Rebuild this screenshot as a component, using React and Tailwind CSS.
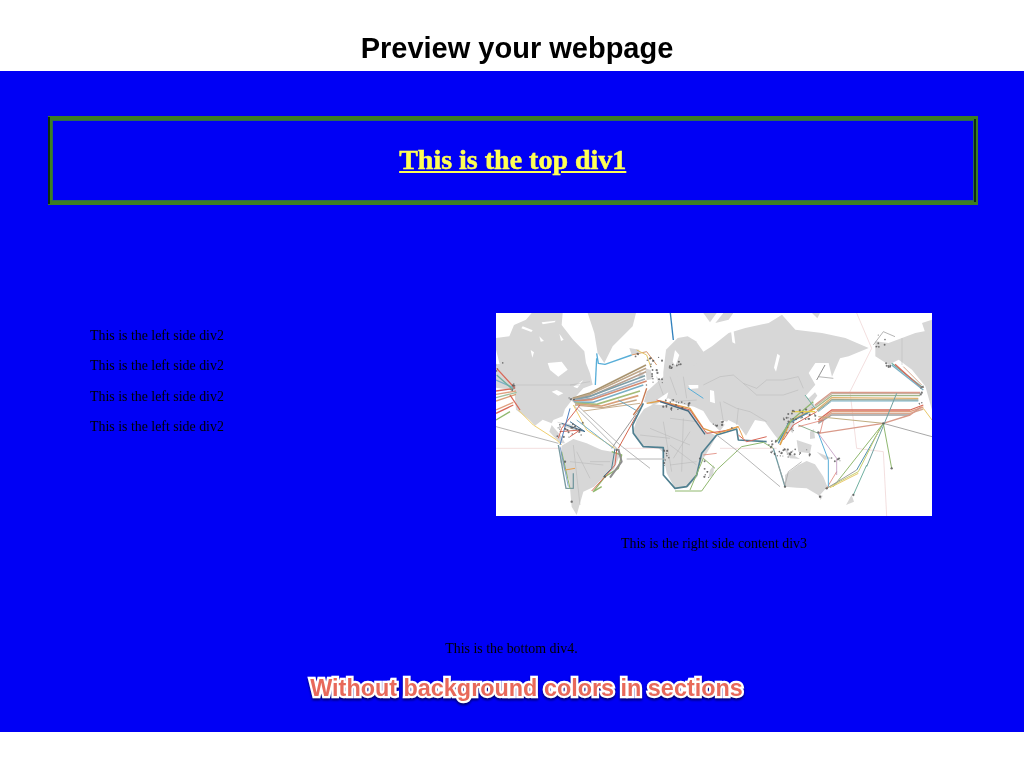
const land = [
  "M18,99 L58,94 L72,60 L108,44 L125,24 L218,24 L215,60 L250,105 L283,139 L288,174 L300,205 L308,239 L280,250 L258,274 L243,289 L225,312 L218,334 L190,345 L185,355 L158,344 L135,362 L118,344 L78,314 L73,254 L50,215 L28,174 L18,134 Z",
  "M293,24 L438,24 L428,64 L398,94 L368,124 L343,174 L323,144 L313,84 Z",
  "M418,129 L448,134 L448,146 L425,150 Z",
  "M466,190 L482,195 L488,222 L470,226 Z",
  "M448,200 L462,205 L456,220 L445,215 Z",
  "M528,134 L563,99 L593,94 L618,109 L640,140 L650,200 L600,280 L520,270 L520,200 Z",
  "M618,180 L640,140 L666,124 L716,84 L766,69 L836,54 L876,29 L916,74 L996,84 L1066,99 L1136,129 L1076,154 L1050,160 L1026,215 L1016,174 L976,174 L956,204 L976,239 L946,274 L966,285 L978,310 L945,325 L915,345 L905,370 L880,400 L868,408 L850,385 L825,350 L795,345 L768,392 L745,360 L715,345 L690,378 L660,350 L640,318 L612,305 L570,296 L535,280 L492,300 L462,290 L470,260 L492,240 L520,215 L560,215 L595,190 Z",
  "M676,54 L700,24 L730,24 L716,44 Z",
  "M640,24 L680,24 L660,52 Z",
  "M966,24 L990,24 L982,40 Z",
  "M1156,109 L1196,114 L1236,99 L1276,84 L1326,74 L1326,315 L1306,244 L1266,194 L1226,164 L1196,179 L1156,154 Z",
  "M1296,54 L1326,44 L1326,90 L1306,84 Z",
  "M18,178 L36,176 L78,245 L62,254 L18,248 Z",
  "M440,345 L462,312 L490,298 L570,305 L605,315 L640,375 L680,392 L650,445 L628,480 L622,515 L595,545 L555,550 L530,505 L518,440 L500,425 L455,422 L428,382 Z",
  "M200,350 L240,358 L285,378 L270,382 L225,365 Z",
  "M185,360 L215,395 L225,415 L210,415 L178,380 Z",
  "M215,422 L250,402 L290,415 L335,435 L392,445 L372,492 L340,518 L312,545 L280,560 L260,630 L245,605 L238,525 L210,470 Z",
  "M885,510 L925,480 L950,468 L975,478 L1000,515 L1012,545 L988,572 L950,550 L920,548 L885,545 Z",
  "M878,425 L900,445 L930,462 L900,460 Z",
  "M920,405 L965,420 L960,445 L925,440 Z",
  "M980,440 L1025,460 L1005,465 Z",
  "M935,300 L975,262 L982,272 L950,315 Z",
  "M660,495 L672,480 L670,510 L655,520 Z",
  "M1085,570 L1092,590 L1068,600 Z",
  "M898,345 L915,345 L908,385 L898,375 Z",
  "M960,380 L972,372 L975,400 L960,402 Z",
  "M985,570 L998,572 L992,585 Z",
];
const holes = [
  "M173,174 L215,170 L233,194 L205,215 L180,195 Z",
  "M122,135 L132,142 L127,158 Z",
  "M98,64 L128,76 L124,81 L94,70 Z",
  "M155,52 L197,47 L194,52 L158,58 Z",
  "M208,86 L221,104 L213,108 Z",
  "M148,94 L162,108 L152,110 Z",
  "M250,245 L280,225 L262,250 Z",
  "M595,240 L625,240 L625,250 L600,252 Z",
  "M660,255 L672,258 L675,295 L660,290 Z",
  "M600,315 L612,312 L650,370 L640,372 Z",
  "M690,345 L712,350 L705,360 Z",
  "M722,68 L730,72 L736,116 L727,112 Z",
  "M862,146 L870,152 L858,200 L852,188 Z",
  "M500,285 L535,262 L530,280 L510,295 Z",
  "M555,135 L568,150 L556,182 L548,170 Z",
  "M185,260 L200,255 L220,265 L205,272 Z",
];
const borders = "M640,240 L690,215 L730,210 L760,235 L800,250 L830,225 L880,225 L925,215 L940,250 M760,235 L800,270 L880,270 L925,255 M700,290 L740,310 L780,320 L830,350 M690,290 L700,350 M745,310 L740,360 M500,215 L520,270 M540,215 L560,270 M580,215 L590,280 M540,340 L620,350 M480,370 L600,420 M540,420 L620,480 M520,350 L545,500 M580,340 L575,500 M450,390 L540,400 M600,380 L550,460 M540,480 L620,470 M260,440 L300,520 M240,470 L340,480 M250,420 L270,600 M300,470 L360,470 M78,240 L268,240 M240,240 L300,230 M1236,99 L1236,180 M540,290 L620,285";
const cables = [
  ["#2f80bd", "M541,24 L550,105", 4],
  ["#58aed8", "M320,145 L325,175 L345,178 L425,150", 4],
  ["#58aed8", "M316,240 L320,160", 4],
  ["#d99a6c", "M425,150 L470,140 L500,180", 3],
  ["#e2c76a", "M440,135 L470,150 L482,185", 3],
  ["#a8946f", "M248,280 L300,264 L468,180", 5],
  ["#bfa78a", "M248,282 L300,268 L468,190", 5],
  ["#b7a090", "M249,284 L305,272 L468,200", 5],
  ["#7f9fa8", "M250,285 L300,274 L465,212", 5],
  ["#9fb0c0", "M250,287 L305,280 L465,222", 5],
  ["#d58a70", "M252,288 L305,284 L470,228", 5],
  ["#79b0c6", "M252,291 L310,292 L460,240", 5],
  ["#a5bc78", "M255,294 L320,298 L450,258", 5],
  ["#d9a07a", "M255,297 L335,303 L445,272", 5],
  ["#c7a989", "M255,300 L340,308 L440,285", 4],
  ["#b7b7b7", "M245,285 L390,420 L480,490", 3],
  ["#b7b7b7", "M250,300 L385,435", 3],
  ["#c8b090", "M280,318 L450,295", 3],
  ["#6fa8c0", "M385,285 L445,320", 3],
  ["#d6674e", "M385,430 L440,330", 3],
  ["#9a9a9a", "M365,430 L450,310", 3],
  ["#c77a52", "M430,330 L455,295 L470,250", 4],
  ["#58aed8", "M595,250 L640,280", 3],
  ["#4f7f90", "M460,295 L428,360 L430,385 L460,425 L520,428 L520,510 L555,550 L590,545 L620,510 L635,445 L680,390 L740,372 L745,405 L830,410", 5],
  ["#e0a24b", "M470,295 L510,288 L600,310 L640,370 L680,385 L745,365", 4],
  ["#d8695a", "M500,285 L600,315 L650,385 L720,375", 3],
  ["#446a80", "M510,290 L595,318 L645,388", 4],
  ["#90b86f", "M555,558 L635,558 L680,495 L755,425 L820,412 L850,430", 3],
  ["#90b86f", "M600,555 L640,460 L675,490", 3],
  ["#b8b8b8", "M680,390 L745,440 L870,545", 3],
  ["#b8b8b8", "M410,462 L525,462", 3],
  ["#d8695a", "M640,450 L680,445", 2],
  ["#6e9aa0", "M850,430 L885,545", 4],
  ["#a0a0a0", "M865,480 L885,540 L895,500 L935,470", 2],
  ["#d8695a", "M745,390 L770,410 L830,395", 3],
  ["#e8a050", "M700,380 L745,365 L760,400", 3],
  ["#f0d070", "M85,315 L130,360 L200,405 L215,420", 3],
  ["#b8b8b8", "M18,365 L205,415", 3],
  ["#789aa0", "M205,420 L228,550 L250,550 L250,505", 4],
  ["#90b86f", "M215,440 L240,550", 3],
  ["#4f7fc0", "M210,425 L235,545", 2],
  ["#e8a050", "M225,495 L255,490", 3],
  ["#90b86f", "M365,440 L395,450 L385,490 L345,515 L310,560 L335,545", 4],
  ["#d8695a", "M380,435 L375,480 L345,515 L305,558", 3],
  ["#4f7f90", "M375,430 L365,490 L340,515", 3],
  ["#d8695a", "M18,258 L75,250", 4], ["#e0a080", "M18,268 L78,258", 4], ["#9fc0a0", "M18,278 L80,262", 4], ["#d9a07a", "M18,288 L78,268", 4], ["#79b0c6", "M18,225 L75,250", 4],
  ["#d8695a", "M18,325 L70,300", 4], ["#90b86f", "M18,345 L60,320", 4], ["#d8695a", "M20,190 L75,250", 4], ["#6fb0a0", "M20,210 L70,255", 4], ["#e0a080", "M18,315 L70,292", 4],
  ["#d8695a", "M60,270 L90,315", 4],
  ["#d99a8a", "M975,300 L1025,262 L1290,262", 4],
  ["#c7b0a0", "M975,304 L1025,266 L1290,266", 4],
  ["#a0b88a", "M975,310 L1025,272 L1290,272", 4],
  ["#e0b070", "M980,315 L1025,278 L1285,280", 4],
  ["#a0a890", "M982,318 L1025,284 L1285,285", 4],
  ["#79b0c6", "M985,320 L1025,288 L1285,288", 3],
  ["#d8695a", "M985,345 L1025,315 L1260,315 L1300,300", 4],
  ["#e0a080", "M985,350 L1025,320 L1260,320 L1300,306", 4],
  ["#d8a890", "M985,352 L1025,325 L1260,325 L1300,312", 4],
  ["#a0a0a0", "M985,355 L1025,330 L1260,330", 4],
  ["#d99a8a", "M985,385 L1180,355 L1260,330 L1295,305", 4],
  ["#c0ad80", "M985,335 L1180,355", 3],
  ["#a8a8a8", "M1180,355 L1326,395", 3],
  ["#6fb0a0", "M1205,175 L1295,245", 4], ["#d8695a", "M1215,178 L1295,250", 4], ["#79b0c6", "M1205,180 L1300,255", 4], ["#d8a890", "M1240,185 L1295,240", 3],
  ["#e8c86a", "M1300,310 L1326,345", 3],
  ["#6fa0a0", "M1220,265 L1130,485", 3], ["#4f8fb0", "M1180,355 L1100,495", 3], ["#90b86f", "M1180,355 L1205,490", 3],
  ["#c8d070", "M1175,360 L1105,500 L1010,550", 3], ["#90b86f", "M1180,355 L1030,545", 3],
  ["#6fb0a0", "M1130,480 L1090,570", 3], ["#a0a0a0", "M1100,495 L1010,550", 3], ["#e8c86a", "M1105,505 L1020,548", 3], ["#d8695a", "M1040,500 L1010,550", 2],
  ["#58aed8", "M985,385 L1015,465 L1015,545", 3], ["#b080b0", "M985,385 L1040,460 L1040,510", 2], ["#90b090", "M925,360 L985,385", 3], ["#d8695a", "M925,365 L1000,345 L990,385", 2],
  ["#e0a24b", "M870,420 L900,350 L975,310", 5], ["#4f8fb0", "M865,415 L895,355 L960,320", 4], ["#90b86f", "M860,410 L905,345 L970,290", 4], ["#d8695a", "M880,405 L910,360 L980,320", 3],
  ["#e8d050", "M905,320 L975,320", 4], ["#6fb0a0", "M945,270 L975,310", 3], ["#909090", "M980,225 L1005,180", 3], ["#909090", "M985,215 L1030,220", 2],
  ["#d8695a", "M210,380 L270,375 L240,395", 3], ["#3f6f90", "M215,355 L285,380 L240,350", 3], ["#f0d070", "M250,300 L290,375 L375,430", 3], ["#79b0c6", "M260,345 L370,430", 3],
  ["#d8695a", "M270,300 L215,370 L205,400", 3], ["#4f7fc0", "M240,310 L210,420", 3], ["#909090", "M1150,120 L1180,80 L1215,95", 2],
  ["#8f8f8f", "M385,432 L395,470 L360,518", 6],
];
const clusters = [
  [495, 195, 28, 45, 22], [555, 178, 18, 12, 10], [30, 185, 14, 14, 6], [70, 245, 8, 14, 5], [245, 283, 8, 6, 5],
  [240, 375, 40, 22, 24], [560, 300, 48, 16, 22], [700, 362, 30, 12, 8], [855, 430, 22, 24, 20], [900, 350, 20, 35, 18],
  [950, 325, 28, 18, 16], [1295, 255, 6, 18, 6], [1195, 178, 10, 8, 6], [1290, 300, 6, 8, 3], [530, 470, 8, 40, 10],
  [640, 490, 18, 30, 8], [930, 445, 55, 14, 18], [1040, 465, 20, 8, 5], [435, 150, 10, 5, 3], [1175, 110, 20, 25, 7],
];
const specks = [];
let seed = 17;
const rnd = () => { seed = (seed * 9301 + 49297) % 233280; return seed / 233280; };
clusters.forEach(([x, y, w, h, n]) => {
  for (let i = 0; i < n; i++) specks.push([x + (rnd() * 2 - 1) * w, y + (rnd() * 2 - 1) * h, 1.5 + rnd() * 2]);
});
[[1180, 355], [985, 382], [380, 435], [345, 515], [1010, 550], [1090, 570], [1205, 490], [990, 575], [245, 590], [225, 470], [885, 545]].forEach(([x, y]) => specks.push([x, y, 3.5]));

export default function App() {
  return (
    <div className="w-[1024px] h-[768px] bg-white overflow-hidden font-['Liberation_Serif',serif] text-[13.9px] leading-[16px] text-black">
      <header className="h-[71px] flex items-end justify-center pb-[6px] pl-[10px]">
        <h1 className="font-['Liberation_Sans',sans-serif] font-bold text-[29px] leading-[34px] blur-[0.3px]">Preview your webpage</h1>
      </header>
      <main className="h-[661px] bg-[#0000f5] pt-[45px]">
        <section className="relative ml-[48px] w-[929.5px] h-[88.5px] border-[4px] border-[#3c7e22] shadow-[inset_0_0_0_1px_#2c6a52] flex items-center justify-center">
          <span className="absolute left-[-4px] top-[-3px] bottom-[-3px] w-[2px] bg-[#0d2c10]" />
          <span className="absolute right-[-2px] top-[-1px] bottom-[-1px] w-[2px] bg-[#0d2c10]" />
          <h2 className="text-[28px] leading-[32px] font-bold underline text-[#ffff55] [-webkit-text-stroke:0.5px_#ffff55] blur-[0.3px]">This is the top div1</h2>
        </section>
        <section className="flex mt-[108.5px]">
          <div className="w-[496px] pl-[90px] pt-[15px] flex flex-col gap-[14.4px] blur-[0.4px]">
            <p>This is the left side div2</p>
            <p>This is the left side div2</p>
            <p>This is the left side div2</p>
            <p>This is the left side div2</p>
          </div>
          <div className="w-[436px] flex flex-col items-center">
            <svg width="436" height="203" viewBox="18 24 1308 609" className="block bg-white blur-[0.7px]">
              <path d="M1100,24 L1145,130 L1080,260 L1100,430 L1180,440 L1190,633 M18,430 L215,430 M400,430 L520,430 M690,430 L860,430" fill="none" stroke="#f0d8d8" strokeWidth="2.5" />
              {land.map((d, i) => <path key={i} d={d} fill="#d7d7d7" />)}
              {holes.map((d, i) => <path key={i} d={d} fill="#ffffff" />)}
              <path d={borders} fill="none" stroke="#b4b4b4" strokeWidth="1.5" />
              {cables.map(([c, d, w], i) => <path key={i} d={d} fill="none" stroke={c} strokeWidth={w} strokeLinejoin="round" />)}
              {specks.map(([x, y, r], i) => <circle key={i} cx={x} cy={y} r={r} fill="#555555" fillOpacity="0.8" />)}
            </svg>
            <p className="mt-[20px] blur-[0.4px]">This is the right side content div3</p>
          </div>
        </section>
        <p className="mt-[89px] text-center pr-[1px] blur-[0.4px]">This is the bottom div4.</p>
        <p className="mt-[16px] h-[30px] text-center pl-[29px] font-['Liberation_Sans',sans-serif] font-bold text-[23.4px] leading-[30px] text-[#e8695a] [-webkit-text-stroke:4.5px_white] [paint-order:stroke_fill] drop-shadow-[0_2px_1px_rgba(0,0,60,0.7)] blur-[0.3px]">Without background colors in sections</p>
      </main>
    </div>
  );
}
